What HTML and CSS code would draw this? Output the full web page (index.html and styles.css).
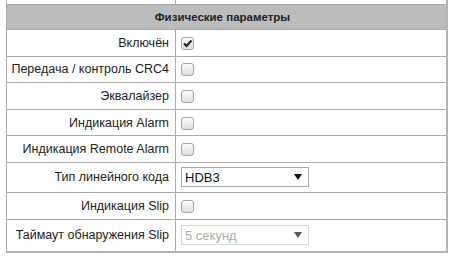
FILE: index.html
```html
<!DOCTYPE html>
<html lang="ru">
<head>
    <meta charset="UTF-8">
    <title>Физические параметры</title>
    <link rel="stylesheet" href="styles.css">
</head>
<body>
    <table class="params">
        <tr class="top-gap">
            <td class="label"></td>
            <td class="value"></td>
        </tr>
        <tr class="head">
            <th colspan="2">Физические параметры</th>
        </tr>
        <tr>
            <td class="label">Включён</td>
            <td class="value"><input type="checkbox" checked></td>
        </tr>
        <tr>
            <td class="label">Передача / контроль CRC4</td>
            <td class="value"><input type="checkbox"></td>
        </tr>
        <tr>
            <td class="label">Эквалайзер</td>
            <td class="value"><input type="checkbox"></td>
        </tr>
        <tr>
            <td class="label">Индикация Alarm</td>
            <td class="value"><input type="checkbox"></td>
        </tr>
        <tr>
            <td class="label">Индикация Remote Alarm</td>
            <td class="value"><input type="checkbox"></td>
        </tr>
        <tr class="sel-row">
            <td class="label">Тип линейного кода</td>
            <td class="value">
                <select>
                    <option>HDB3</option>
                    <option>AMI</option>
                </select>
            </td>
        </tr>
        <tr>
            <td class="label">Индикация Slip</td>
            <td class="value"><input type="checkbox"></td>
        </tr>
        <tr class="sel-row last">
            <td class="label">Таймаут обнаружения Slip</td>
            <td class="value">
                <select disabled>
                    <option>5 секунд</option>
                </select>
            </td>
        </tr>
    </table>
</body>
</html>
```

FILE: styles.css
```css
body {
    margin: 0;
    background: #fff;
    font-family: "Liberation Sans", Arial, sans-serif;
    font-size: 12.5px;
    color: #222;
}

.params {
    border-collapse: collapse;
    table-layout: fixed;
    width: 442px;
    margin-left: 6px;
    border-right: 2px solid #b4b4b4;
    border-bottom: 2px solid #b4b4b4;
}

.params td,
.params th {
    border: 1px solid #ababab;
    padding: 0 6px 0 1px;
    white-space: nowrap;
}

.params td {
    height: 25.6px;
}

.params .top-gap td {
    height: 4px;
    border-top: none;
}

.head th {
    background: #bcbcbc;
    font-size: 11.5px;
    font-weight: bold;
    text-align: center;
    height: 24px;
    padding: 0 8px 0 0;
}

.label {
    width: 161px;
    text-align: right;
}

.value input[type="checkbox"] {
    appearance: none;
    -webkit-appearance: none;
    width: 13px;
    height: 13px;
    margin: 0 0 0 4px;
    vertical-align: middle;
    border: 1px solid #a6a6a6;
    border-radius: 3px;
    background: linear-gradient(#fcfcfc, #dedede);
}

.value input[type="checkbox"]:checked {
    background: url("data:image/svg+xml,%3Csvg xmlns='http://www.w3.org/2000/svg' width='11' height='11'%3E%3Cpath d='M2 5.5 L4.5 8 L9.5 2.5' fill='none' stroke='%23222' stroke-width='2.2'/%3E%3C/svg%3E") center no-repeat,
        linear-gradient(#fcfcfc, #dedede);
}

.params .sel-row td {
    height: 29px;
}

.params .last td {
    height: 31px;
}

.value select {
    appearance: none;
    -webkit-appearance: none;
    width: 128px;
    height: 20px;
    margin-left: 4px;
    padding: 0 0 0 3px;
    font-family: "Liberation Sans", Arial, sans-serif;
    font-size: 13px;
    color: #111;
    border: 1px solid #a9a9a9;
    border-radius: 0;
    background: #fff url("data:image/svg+xml,%3Csvg xmlns='http://www.w3.org/2000/svg' width='8' height='6'%3E%3Cpath d='M0 0 L8 0 L4 6 Z' fill='%23111'/%3E%3C/svg%3E") no-repeat right 6px center;
    vertical-align: middle;
}

.value select:disabled {
    color: #8a8a8a;
    border-color: #c6c6c6;
}
```
